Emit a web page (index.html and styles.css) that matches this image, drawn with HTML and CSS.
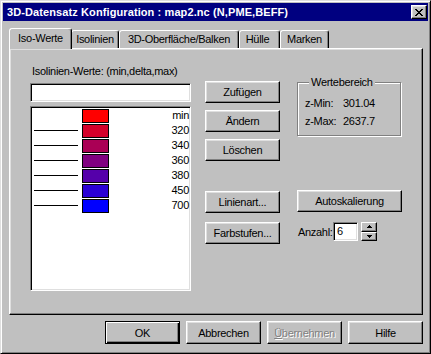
FILE: index.html
```html
<!DOCTYPE html>
<html lang="de">
<head>
<meta charset="UTF-8">
<title>3D-Datensatz Konfiguration</title>
<link rel="stylesheet" href="styles.css">
</head>
<body>
<div class="window">
	<div class="titlebar">
		<span class="title">3D-Datensatz Konfiguration : map2.nc (N,PME,BEFF)</span>
		<button class="close">
			<svg width="8" height="7" viewBox="0 0 8 7" shape-rendering="crispEdges"><path d="M0 0h2v1h-2zM6 0h2v1h-2zM1 1h2v1h-2zM5 1h2v1h-2zM2 2h4v1h-4zM3 3h2v1h-2zM2 4h4v1h-4zM1 5h2v1h-2zM5 5h2v1h-2zM0 6h2v1h-2zM6 6h2v1h-2z" fill="#000"/></svg>
		</button>
	</div>

	<div class="content">
		<div class="tabs">
			<div class="tab active tab-iso">Iso-Werte</div>
			<div class="tab tab-lines">Isolinien</div>
			<div class="tab tab-surface">3D-Oberfläche/Balken</div>
			<div class="tab tab-hull">Hülle</div>
			<div class="tab tab-marks">Marken</div>
		</div>

		<div class="panel">
			<div class="col-list">
				<label class="caption" for="isoValues">Isolinien-Werte: (min,delta,max)</label>
				<input class="field" id="isoValues" type="text" value="">
				<div class="listbox">
					<div class="row"><span class="line none"></span><span class="swatch" style="background:#ff0000"></span><span class="val">min</span></div>
					<div class="row"><span class="line"></span><span class="swatch" style="background:#d5002a"></span><span class="val">320</span></div>
					<div class="row"><span class="line"></span><span class="swatch" style="background:#aa0055"></span><span class="val">340</span></div>
					<div class="row"><span class="line"></span><span class="swatch" style="background:#800080"></span><span class="val">360</span></div>
					<div class="row"><span class="line"></span><span class="swatch" style="background:#5500aa"></span><span class="val">380</span></div>
					<div class="row"><span class="line"></span><span class="swatch" style="background:#2a00d5"></span><span class="val">450</span></div>
					<div class="row"><span class="line"></span><span class="swatch" style="background:#0000ff"></span><span class="val">700</span></div>
				</div>
			</div>

			<div class="col-buttons">
				<button class="btn">Zufügen</button>
				<button class="btn">Ändern</button>
				<button class="btn">Löschen</button>
				<button class="btn gap-big">Linienart...</button>
				<button class="btn gap-small">Farbstufen...</button>
			</div>

			<div class="col-right">
				<fieldset class="group">
					<legend>Wertebereich</legend>
					<div class="range"><span class="range-label">z-Min:</span><span>301.04</span></div>
					<div class="range"><span class="range-label">z-Max:</span><span>2637.7</span></div>
				</fieldset>
				<button class="btn wide">Autoskalierung</button>
				<div class="count">
					<span class="count-label">Anzahl:</span>
					<span class="count-field">6</span>
					<span class="spinner">
						<span class="spin"><svg width="5" height="3" viewBox="0 0 5 3" shape-rendering="crispEdges"><path d="M2 0h1v1h1v1h1v1h-5v-1h1v-1h1z" fill="#000"/></svg></span>
						<span class="spin"><svg width="5" height="3" viewBox="0 0 5 3" shape-rendering="crispEdges"><path d="M0 0h5v1h-1v1h-1v1h-1v-1h-1v-1h-1z" fill="#000"/></svg></span>
					</span>
				</div>
			</div>
		</div>

		<div class="footer">
			<button class="btn default">OK</button>
			<button class="btn">Abbrechen</button>
			<button class="btn" disabled><u>Ü</u>bernehmen</button>
			<button class="btn">Hilfe</button>
		</div>
	</div>
</div>
</body>
</html>
```

FILE: styles.css
```css
body {
	margin: 0;
	color: #000;
	font-family: 'Liberation Sans', Arial, sans-serif;
	font-size: 11px;
	letter-spacing: -0.3px;
}

.window {
	width: 431px;
	height: 354px;
	box-sizing: border-box;
	display: flex;
	flex-direction: column;
	padding: 2px;
	background: #c0c0c0;
	border: 1px solid;
	border-color: #dfdfdf #000 #000 #dfdfdf;
	box-shadow: inset 1px 1px #fff, inset -1px -1px #808080;
}

/* Titelleiste */
.titlebar {
	height: 18px;
	flex: none;
	display: flex;
	align-items: center;
	padding: 0 1px 0 4px;
	background: #000080;
	color: #fff;
}

.title {
	flex: 1;
	font-weight: bold;
	font-size: 11px;
	letter-spacing: 0.1px;
	white-space: nowrap;
}

.close {
	width: 16px;
	height: 14px;
	padding: 0;
	display: flex;
	align-items: center;
	justify-content: center;
	background: #c0c0c0;
	border: 1px solid;
	border-color: #fff #000 #000 #fff;
	box-shadow: inset -1px -1px #808080, inset 1px 1px #dfdfdf;
}

.content {
	flex: 1;
	display: flex;
	flex-direction: column;
	padding: 7px 5px 7px 6px;
}

/* Reiter */
.tabs {
	height: 20px;
	flex: none;
	display: flex;
	align-items: flex-end;
	padding-left: 2px;
	position: relative;
	z-index: 1;
}

.tab {
	height: 18px;
	box-sizing: border-box;
	padding: 0;
	line-height: 16px;
	text-align: center;
	white-space: nowrap;
	background: #c0c0c0;
	border: 1px solid;
	border-bottom: 0;
	border-color: #fff #000 transparent #fff;
	border-radius: 3px 3px 0 0;
	box-shadow: inset -1px 0 #808080;
}

.tab.active {
	height: 21px;
	margin: 0 -1px -1px -2px;
	padding-top: 1px;
	position: relative;
	z-index: 2;
}

.tab-iso {
	width: 63px;
}

.tab-lines {
	width: 48px;
}

.tab-surface {
	width: 120px;
}

.tab-hull {
	width: 41px;
	padding-right: 4px;
}

.tab-marks {
	width: 49px;
}

/* Seite */
.panel {
	height: 267px;
	flex: none;
	box-sizing: border-box;
	display: flex;
	align-items: flex-start;
	padding: 16px 0 0 20px;
	border: 1px solid;
	border-color: #fff #000 #000 #fff;
	box-shadow: inset -1px -1px #808080, inset 1px 1px #dfdfdf;
}

.col-list {
	width: 161px;
	display: flex;
	flex-direction: column;
}

.caption {
	display: block;
	height: 13px;
	margin-left: 2px;
	line-height: 13px;
	white-space: nowrap;
}

.field,
.listbox,
.count-field {
	box-sizing: border-box;
	background: #fff;
	border: 1px solid;
	border-color: #808080 #fff #fff #808080;
	box-shadow: inset 1px 1px #000, inset -1px -1px #dfdfdf;
}

.field {
	height: 19px;
	margin: 5px 0 0;
	padding: 0 3px;
	font: inherit;
	outline: none;
}

.listbox {
	height: 185px;
	margin-top: 4px;
	padding: 1px;
}

.row {
	height: 15px;
	display: flex;
	align-items: flex-start;
}

.line {
	width: 44px;
	height: 1px;
	margin: 7px 0 0 2px;
	background: #000;
}

.line.none {
	background: transparent;
}

.swatch {
	width: 27px;
	height: 14px;
	box-sizing: border-box;
	margin: 1px 0 0 4px;
	border: 1px solid #000;
}

.val {
	flex: 1;
	text-align: right;
	line-height: 15px;
}

/* Knöpfe */
.btn {
	width: 75px;
	height: 22px;
	padding: 0;
	font: inherit;
	letter-spacing: inherit;
	color: #000;
	background: #c0c0c0;
	border: 1px solid;
	border-color: #fff #000 #000 #fff;
	border-radius: 0;
	box-shadow: inset -1px -1px #808080, inset 1px 1px #dfdfdf;
	outline: none;
}

.btn:disabled {
	color: #808080;
	text-shadow: 1px 1px #fff;
}

.btn.default {
	border-color: #000;
	box-shadow: inset 1px 1px #fff, inset -1px -1px #000, inset -2px -2px #808080;
}

.col-buttons {
	width: 75px;
	margin: 16px 0 0 14px;
	display: flex;
	flex-direction: column;
	gap: 7px;
}

.col-buttons .gap-big {
	margin-top: 23px;
}

.col-buttons .gap-small {
	margin-top: 2px;
}

.col-right {
	width: 105px;
	margin: 11px 0 0 17px;
	display: flex;
	flex-direction: column;
}

.group {
	width: 104px;
	box-sizing: border-box;
	margin: 0;
	padding: 5px 0 5px 7px;
	border: 1px solid #808080;
	box-shadow: inset 1px 1px #fff, 1px 1px #fff;
}

.group legend {
	margin-left: 4px;
	padding: 0 2px;
	line-height: 13px;
	background: #c0c0c0;
}

.range {
	display: flex;
	line-height: 18px;
	white-space: nowrap;
}

.range-label {
	width: 38px;
}

.btn.wide {
	width: 105px;
	margin-top: 54px;
}

.count {
	display: flex;
	align-items: center;
	height: 21px;
	margin: 9px 0 0 1px;
}

.count-label {
	width: 35px;
	white-space: nowrap;
}

.count-field {
	width: 25px;
	height: 19px;
	padding: 0 3px;
	line-height: 17px;
}

.spinner {
	width: 16px;
	height: 19px;
	margin-left: 3px;
	display: flex;
	flex-direction: column;
}

.spin {
	flex: 1;
	display: flex;
	align-items: center;
	justify-content: center;
	box-sizing: border-box;
	background: #c0c0c0;
	border: 1px solid;
	border-color: #fff #000 #000 #fff;
	box-shadow: inset -1px -1px #808080;
}

/* Dialogknöpfe */
.footer {
	display: flex;
	justify-content: flex-end;
	gap: 6px;
	margin-top: 6px;
}

.footer .btn {
	height: 23px;
}
```
